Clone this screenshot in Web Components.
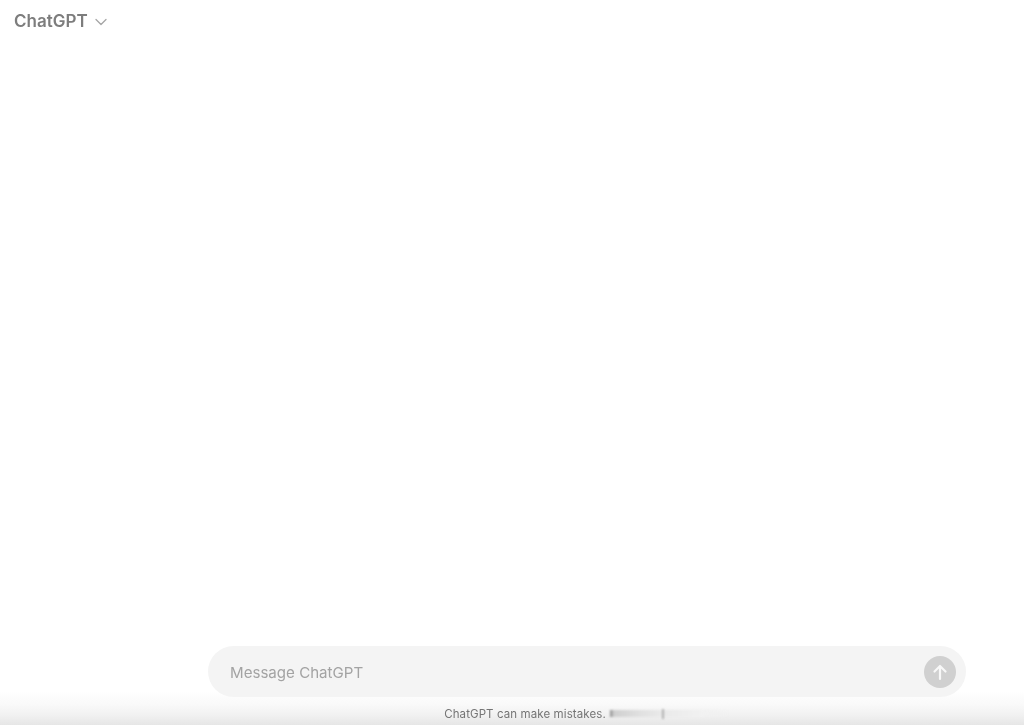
<!doctype html>
<html>
<head>
<meta charset="utf-8">
<title>ChatGPT</title>
<style>
  html, body { margin: 0; height: 100%; background: #fff; }
  body { font-family: Inter, "Liberation Sans", sans-serif; overflow: hidden; }
</style>
</head>
<body>
<chat-app>
  <chat-header slot="header">ChatGPT</chat-header>
  <chat-composer slot="composer" placeholder="Message ChatGPT"></chat-composer>
  <chat-footer slot="footer">ChatGPT can make mistakes.</chat-footer>
</chat-app>
<script>
const appTemplate = document.createElement("template");
appTemplate.innerHTML = /*html*/ `
  <style>
    :host {
      display: flex;
      flex-direction: column;
      height: 100vh;
      background: linear-gradient(to bottom, #fff 0, #fff calc(100% - 34px), #f9f9f9 calc(100% - 20px), #f1f1f1 calc(100% - 10px), #e6e6e6 100%);
    }
    .main { flex: 1; }
    .bottom { padding-left: 208px; padding-right: 58px; }
  </style>
  <slot name="header"></slot>
  <div class="main"></div>
  <div class="bottom">
    <slot name="composer"></slot>
    <slot name="footer"></slot>
  </div>
`;

class ChatApp extends HTMLElement {
  constructor() {
    super();
    this.attachShadow({ mode: "open" });
    this.shadowRoot.append(appTemplate.content.cloneNode(true));
  }
}

const headerTemplate = document.createElement("template");
headerTemplate.innerHTML = /*html*/ `
  <style>
    :host {
      display: flex;
      align-items: center;
      gap: 7px;
      height: 42px;
      padding-left: 14px;
      font-size: 17px;
      font-weight: 600;
      color: #7d7d7d;
      filter: blur(0.3px);
    }
    svg { display: block; margin-top: 1px; }
  </style>
  <slot></slot>
  <svg width="12" height="8" viewBox="0 0 12 8" fill="none" stroke="#a6a6a6" stroke-width="1.3" stroke-linecap="round" stroke-linejoin="round">
    <path d="M1 1.5 L6 6.5 L11 1.5"/>
  </svg>
`;

class ChatHeader extends HTMLElement {
  constructor() {
    super();
    this.attachShadow({ mode: "open" });
    this.shadowRoot.append(headerTemplate.content.cloneNode(true));
  }
}

const composerTemplate = document.createElement("template");
composerTemplate.innerHTML = /*html*/ `
  <style>
    :host {
      display: flex;
      align-items: center;
      justify-content: space-between;
      height: 51px;
      padding: 0 10px 0 22px;
      border-radius: 26px;
      background: #f4f4f4;
    }
    .placeholder { padding-top: 1px; font-size: 15.1px; color: #a3a3a3; filter: blur(0.3px); }
    button {
      display: flex;
      align-items: center;
      justify-content: center;
      width: 32px;
      height: 32px;
      padding: 0;
      border: 0;
      border-radius: 50%;
      background: #d0d0d0;
    }
  </style>
  <span class="placeholder"></span>
  <button aria-label="Send">
    <svg width="18" height="18" viewBox="0 0 18 18" fill="none" stroke="#f8f8f8" stroke-width="2.2" stroke-linecap="round" stroke-linejoin="round">
      <path d="M9 16 V3 M3.5 8.5 L9 3 L14.5 8.5"/>
    </svg>
  </button>
`;

class ChatComposer extends HTMLElement {
  constructor() {
    super();
    this.attachShadow({ mode: "open" });
    this.shadowRoot.append(composerTemplate.content.cloneNode(true));
  }

  connectedCallback() {
    this.shadowRoot.querySelector(".placeholder").textContent = this.getAttribute("placeholder");
  }
}

const footerTemplate = document.createElement("template");
footerTemplate.innerHTML = /*html*/ `
  <style>
    :host {
      display: flex;
      align-items: center;
      justify-content: center;
      gap: 4px;
      box-sizing: border-box;
      height: 28px;
      padding-top: 5px;
      font-size: 11.5px;
      letter-spacing: 0.1px;
      color: #757575;
    }
    .text { filter: blur(0.25px); }
    .smudge {
      position: relative;
      width: 120px;
      height: 7px;
      background: linear-gradient(to right, #8a8a8a 0, #cfcfcf 4px, #e0e0e0 30px, #e9e9e9 50px, #f1f1f1 90px, transparent 120px);
      filter: blur(1px);
    }
    .smudge::after {
      content: "";
      position: absolute;
      left: 52px;
      top: -1px;
      width: 2px;
      height: 10px;
      background: #b0b0b0;
    }
  </style>
  <span class="text"><slot></slot></span>
  <span class="smudge"></span>
`;

class ChatFooter extends HTMLElement {
  constructor() {
    super();
    this.attachShadow({ mode: "open" });
    this.shadowRoot.append(footerTemplate.content.cloneNode(true));
  }
}

window.customElements.define("chat-app", ChatApp);
window.customElements.define("chat-header", ChatHeader);
window.customElements.define("chat-composer", ChatComposer);
window.customElements.define("chat-footer", ChatFooter);
</script>
</body>
</html>
